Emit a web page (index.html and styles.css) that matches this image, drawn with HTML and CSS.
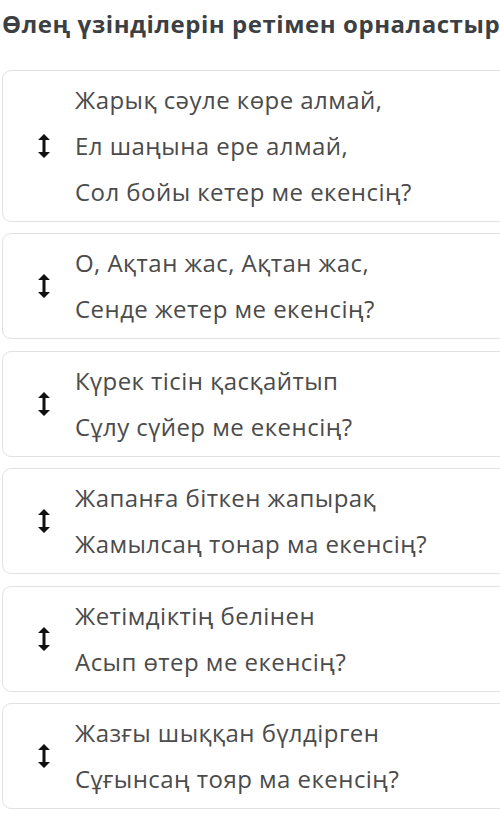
FILE: index.html
```html
<!DOCTYPE html>
<html lang="kk">
<head>
<meta charset="utf-8">
<link rel="stylesheet" href="styles.css">
</head>
<body>
<div class="page">
  <h1 class="title">Өлең үзінділерін ретімен орналастыр</h1>
  <div class="list">
    <div class="card">
      <span class="handle"><svg width="12" height="24" viewBox="0 0 12 24"><path d="M6 0 L12 6 L7.5 6 L7.5 18 L12 18 L6 24 L0 18 L4.5 18 L4.5 6 L0 6 Z" fill="#111"/></svg></span>
      <div class="lines">
        <div>Жарық сәуле көре алмай,</div>
        <div>Ел шаңына ере алмай,</div>
        <div>Сол бойы кетер ме екенсің?</div>
      </div>
    </div>
    <div class="card">
      <span class="handle"><svg width="12" height="24" viewBox="0 0 12 24"><path d="M6 0 L12 6 L7.5 6 L7.5 18 L12 18 L6 24 L0 18 L4.5 18 L4.5 6 L0 6 Z" fill="#111"/></svg></span>
      <div class="lines">
        <div>О, Ақтан жас, Ақтан жас,</div>
        <div>Сенде жетер ме екенсің?</div>
      </div>
    </div>
    <div class="card">
      <span class="handle"><svg width="12" height="24" viewBox="0 0 12 24"><path d="M6 0 L12 6 L7.5 6 L7.5 18 L12 18 L6 24 L0 18 L4.5 18 L4.5 6 L0 6 Z" fill="#111"/></svg></span>
      <div class="lines">
        <div>Күрек тісін қасқайтып</div>
        <div>Сұлу сүйер ме екенсің?</div>
      </div>
    </div>
    <div class="card">
      <span class="handle"><svg width="12" height="24" viewBox="0 0 12 24"><path d="M6 0 L12 6 L7.5 6 L7.5 18 L12 18 L6 24 L0 18 L4.5 18 L4.5 6 L0 6 Z" fill="#111"/></svg></span>
      <div class="lines">
        <div>Жапанға біткен жапырақ</div>
        <div>Жамылсаң тонар ма екенсің?</div>
      </div>
    </div>
    <div class="card">
      <span class="handle"><svg width="12" height="24" viewBox="0 0 12 24"><path d="M6 0 L12 6 L7.5 6 L7.5 18 L12 18 L6 24 L0 18 L4.5 18 L4.5 6 L0 6 Z" fill="#111"/></svg></span>
      <div class="lines">
        <div>Жетімдіктің белінен</div>
        <div>Асып өтер ме екенсің?</div>
      </div>
    </div>
    <div class="card">
      <span class="handle"><svg width="12" height="24" viewBox="0 0 12 24"><path d="M6 0 L12 6 L7.5 6 L7.5 18 L12 18 L6 24 L0 18 L4.5 18 L4.5 6 L0 6 Z" fill="#111"/></svg></span>
      <div class="lines">
        <div>Жазғы шыққан бүлдірген</div>
        <div>Сұғынсаң тояр ма екенсің?</div>
      </div>
    </div>
  </div>
</div>
</body>
</html>
```

FILE: styles.css
```css
html, body {
  margin: 0;
  padding: 0;
  background: #ffffff;
  overflow: hidden;
}
.page {
  width: 540px;
  padding: 0 0 0 2px;
  font-family: "Open Sans", "Noto Sans", sans-serif;
}
.title {
  margin: 0;
  padding-top: 9px;
  height: 70px;
  box-sizing: border-box;
  font-size: 24px;
  line-height: 30px;
  letter-spacing: 0.55px;
  font-weight: 700;
  color: #3c3f43;
  white-space: nowrap;
}
.list {
  display: flex;
  flex-direction: column;
  gap: 11.4px;
}
.card {
  display: flex;
  align-items: center;
  border: 1px solid #e2e2e2;
  border-radius: 9px;
  padding: 6px 0;
  background: #fff;
}
.handle {
  width: 72px;
  display: flex;
  justify-content: center;
  padding-left: 10px;
  box-sizing: border-box;
}
.handle svg {
  display: block;
}
.lines {
  font-size: 24px;
  line-height: 46px;
  letter-spacing: 0.45px;
  color: #4b4b4b;
  white-space: nowrap;
}
```
